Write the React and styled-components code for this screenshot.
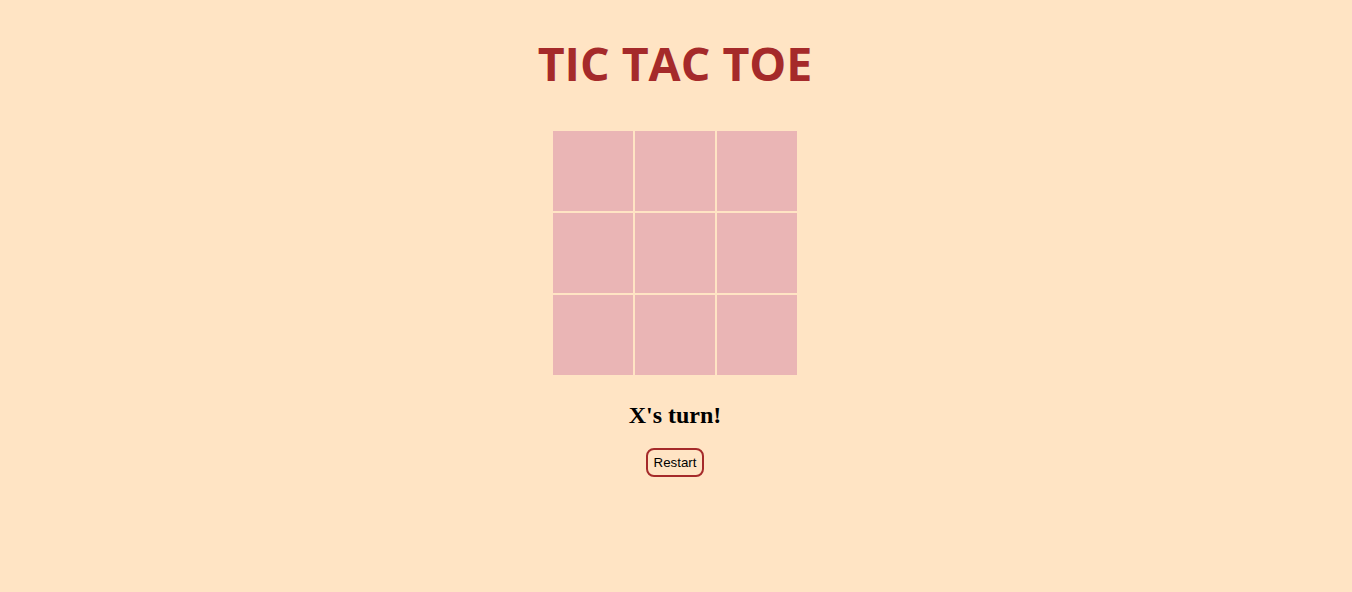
import React, { useState } from 'react';
import styled, { createGlobalStyle } from 'styled-components';

const GlobalStyle = createGlobalStyle`
  html, body {
    margin: 0;
    background-color: #ffe4c4;
  }
`;

const Page = styled.div`
  display: flex;
  flex-direction: column;
  align-items: center;
  min-height: 592px;
  padding: 34px 2px 0 0;
  box-sizing: border-box;
`;

const Title = styled.h1`
  margin: 0;
  font-family: "Open Sans", "Noto Sans", sans-serif;
  font-weight: 700;
  font-size: 46.5px;
  line-height: 58px;
  color: #a52a2a;
`;

const Board = styled.div`
  display: grid;
  grid-template-columns: repeat(3, 80px);
  grid-template-rows: repeat(3, 80px);
  gap: 2px;
  margin-top: 39px;
`;

const Cell = styled.button`
  border: none;
  padding: 0;
  background-color: #eab5b5;
  font-family: "Open Sans", sans-serif;
  font-size: 40px;
  font-weight: 700;
  color: #a52a2a;
  cursor: pointer;
`;

const Status = styled.h2`
  margin: 26px 0 0;
  font-family: "Liberation Serif", serif;
  font-weight: 700;
  font-size: 24px;
  line-height: 28px;
  color: #000;
`;

const RestartButton = styled.button`
  margin-top: 19px;
  padding: 5px 5.5px;
  font-family: "Liberation Sans", Arial, sans-serif;
  font-size: 13.33px;
  color: #000;
  background-color: #ffe4c4;
  border: 2px solid #a52a2a;
  border-radius: 8px;
  cursor: pointer;
`;

export default function App() {
  const [squares, setSquares] = useState(Array(9).fill(null));
  const [xTurn, setXTurn] = useState(true);

  const play = (i) => {
    if (squares[i]) return;
    const next = squares.slice();
    next[i] = xTurn ? 'X' : 'O';
    setSquares(next);
    setXTurn(!xTurn);
  };

  const restart = () => {
    setSquares(Array(9).fill(null));
    setXTurn(true);
  };

  return (
    <>
      <GlobalStyle />
      <Page>
        <Title>TIC TAC TOE</Title>
        <Board>
          {squares.map((s, i) => (
            <Cell key={i} onClick={() => play(i)}>{s}</Cell>
          ))}
        </Board>
        <Status>{xTurn ? 'X' : 'O'}'s turn!</Status>
        <RestartButton onClick={restart}>Restart</RestartButton>
      </Page>
    </>
  );
}
